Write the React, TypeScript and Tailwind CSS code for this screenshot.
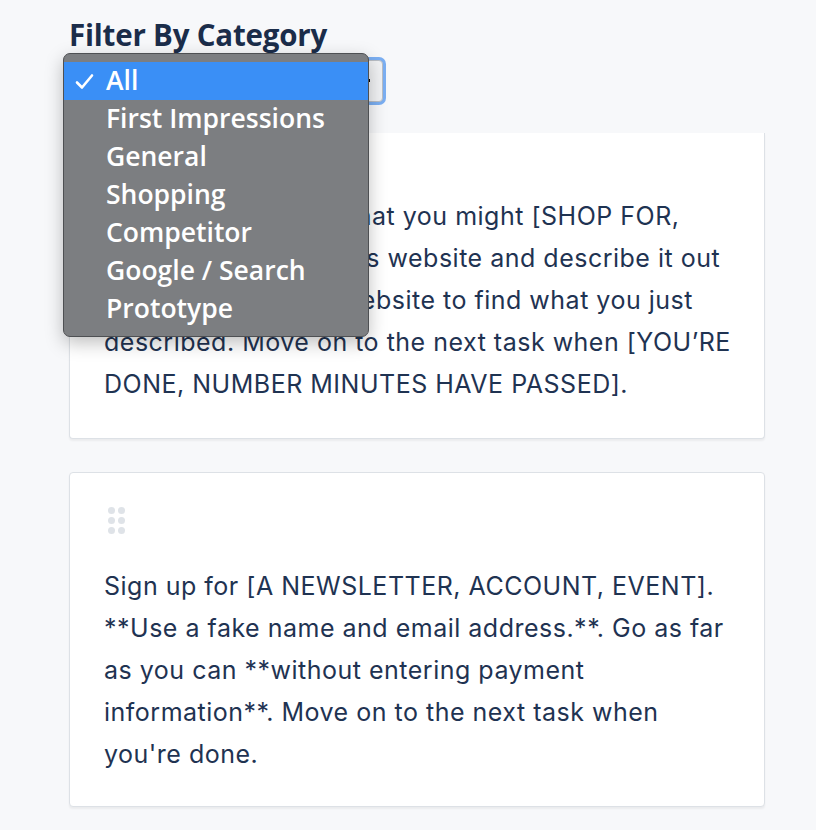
import React from 'react'

const options = ['All', 'First Impressions', 'General', 'Shopping', 'Competitor', 'Google / Search', 'Prototype']

function DragHandle() {
  return (
    <div className="grid grid-cols-2 gap-[3px] w-[17px]">
      {Array.from({ length: 6 }).map((_, i) => (
        <span key={i} className="w-[7px] h-[7px] rounded-full bg-[#dfe3e8]" />
      ))}
    </div>
  )
}

function Check() {
  return (
    <svg width="19" height="17" viewBox="0 0 19 17" fill="none">
      <path d="M2 9.5 L7 14.5 L17 2.5" stroke="white" strokeWidth="2.6" strokeLinecap="round" strokeLinejoin="round" />
    </svg>
  )
}

export default function App() {
  return (
    <div className="min-h-screen bg-[#f7f8fa] font-['Inter',sans-serif] text-[#1f3352]">
      <div className="ml-[69px] w-[696px]">
        {/* Header */}
        <div className="relative h-[133px] pt-[16px]">
          <h2 className="font-['Open_Sans',sans-serif] text-[29.5px] leading-[38px] font-bold text-[#1b2d4a] tracking-[-0.2px]">
            Filter By Category
          </h2>
          <div className="relative mt-[6px] w-[314px] h-[42px] rounded-[4px] border border-[#b9bec5] bg-[#f1f2f4] ring-[3px] ring-[#5b9cf0]/80">
            <span className="absolute right-[12px] top-[18px] w-[3px] h-[3px] bg-black" />
          </div>

          {/* Open dropdown */}
          <div className="absolute left-[-6px] top-[53px] w-[306px] rounded-[7px] border border-[#4e5053] bg-[#7c7e81] py-[8px] shadow-[0_6px_18px_rgba(0,0,0,0.25)] font-['Open_Sans',sans-serif]">
            {options.map((o, i) => (
              <div
                key={o}
                className={`flex items-center h-[38px] text-[26.5px] font-semibold text-white ${i === 0 ? 'bg-[#3a8ff6]' : ''}`}
              >
                <span className="w-[42px] pl-[11px] flex items-center">{i === 0 ? <Check /> : null}</span>
                <span>{o}</span>
              </div>
            ))}
          </div>
        </div>

        {/* Cards */}
        <div className="flex flex-col gap-[33px] pb-[24px]">
          <div className="bg-white border-x border-b border-[#dde1e6] rounded-b-[4px] shadow-[0_2px_2px_rgba(0,0,0,0.05)] px-[34px] pt-[62px] pb-[33px] text-[25px] tracking-[0.5px] leading-[42px] whitespace-nowrap">
            Think of something that you might [SHOP FOR,
            <br />
            BUY, DO, USE]{'\u2009'} on this website and describe it out
            <br />
            loud. Then use the website to find what you just
            <br />
            described. Move on to the next task when [YOU’RE
            <br />
            DONE, NUMBER MINUTES HAVE PASSED].
          </div>

          <div className="bg-white border border-[#dde1e6] rounded-[4px] shadow-[0_2px_2px_rgba(0,0,0,0.05)] px-[34px] pt-[34px] pb-[31px] text-[25px] tracking-[0.5px] leading-[42px] whitespace-nowrap">
            <div className="pl-[4px] mb-[31px]">
              <DragHandle />
            </div>
            <p>
              Sign up for [A NEWSLETTER, ACCOUNT, EVENT].
              <br />
              **Use a fake name and email address.**. Go as far
              <br />
              as you can **without entering payment
              <br />
              information**. Move on to the next task when
              <br />
              you're done.
            </p>
          </div>
        </div>
      </div>
    </div>
  )
}
